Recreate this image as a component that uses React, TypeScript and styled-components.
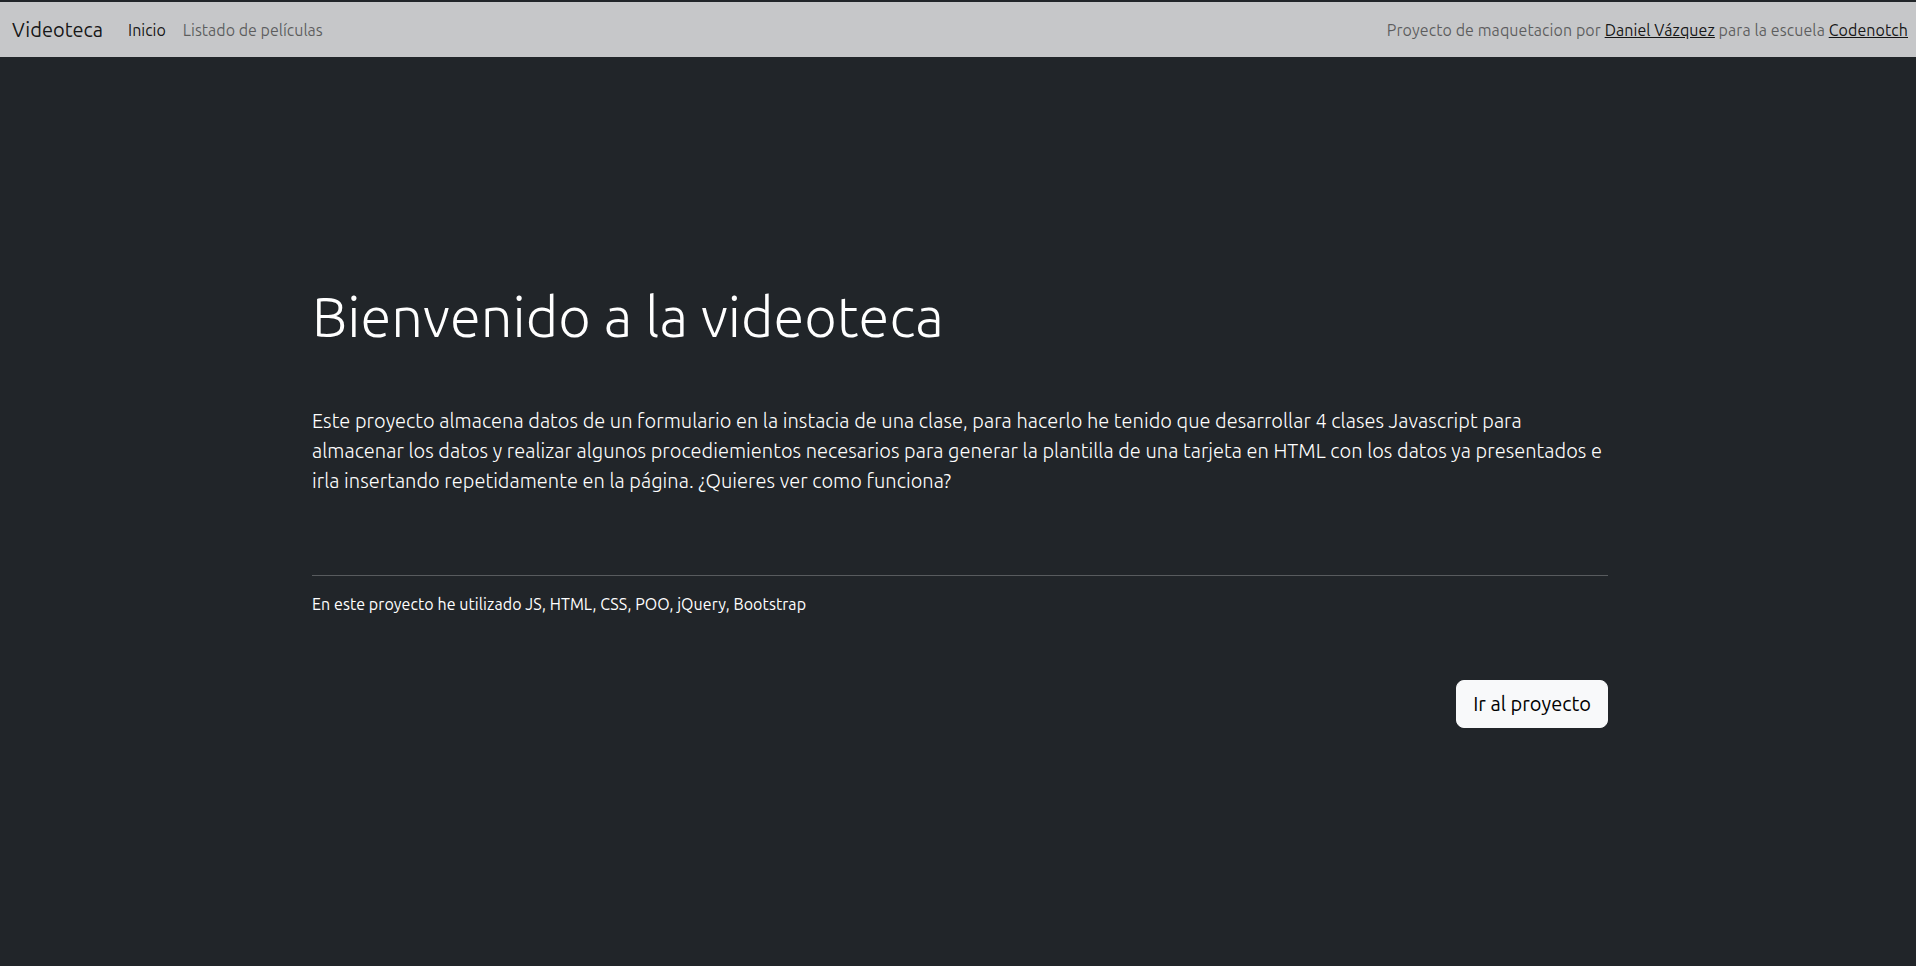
import React from 'react';
import styled, { createGlobalStyle } from 'styled-components';

const GlobalStyle = createGlobalStyle`
  html, body {
    margin: 0;
    padding: 0;
    background-color: #212529;
  }
  body {
    font-family: Ubuntu, "Open Sans", "Noto Sans", sans-serif;
    font-size: 16px;
    line-height: 1.5;
    color: #fff;
    min-height: 966px;
    border-top: 2px solid #212529;
  }
`;

const Navbar = styled.nav`
  display: flex;
  align-items: center;
  justify-content: space-between;
  height: 55px;
  padding: 0 8px 0 12px;
  background-color: #c6c7c9;
  box-sizing: border-box;
`;

const NavLeft = styled.div`
  display: flex;
  align-items: center;
`;

const Brand = styled.a`
  font-size: 20px;
  line-height: 30px;
  color: rgba(0, 0, 0, 0.9);
  text-decoration: none;
  margin-right: 25px;
`;

const NavLink = styled.a<{ $active?: boolean }>`
  font-size: 16px;
  color: ${p => (p.$active ? 'rgba(0, 0, 0, 0.9)' : 'rgba(0, 0, 0, 0.55)')};
  text-decoration: none;
  margin-right: 17px;
`;

const Credits = styled.span`
  font-size: 16px;
  letter-spacing: 0.07px;
  color: rgba(0, 0, 0, 0.55);

  a {
    color: rgba(0, 0, 0, 0.9);
    text-decoration: underline;
  }
`;

const Hero = styled.main`
  width: 1296px;
  margin-left: calc(50% - 646px);
  padding-top: 226px;
  display: flex;
  flex-direction: column;
`;

const Title = styled.h1`
  font-size: 56px;
  font-weight: 300;
  line-height: 1.2;
  letter-spacing: 0.1px;
  margin: 0 0 56px;
`;

const Lead = styled.p`
  font-size: 20px;
  font-weight: 300;
  line-height: 30px;
  letter-spacing: 0.04px;
  margin: 0 0 79px;
`;

const Divider = styled.hr`
  border: 0;
  border-top: 1px solid rgba(255, 255, 255, 0.25);
  margin: 0 0 16px;
`;

const Stack = styled.p`
  font-size: 16px;
  letter-spacing: 0.07px;
  margin: 0 0 64px;
`;

const Actions = styled.div`
  display: flex;
  justify-content: flex-end;
`;

const Button = styled.a`
  display: inline-block;
  padding: 8px 16px;
  font-size: 20px;
  line-height: 30px;
  color: #000;
  background-color: #f8f9fa;
  border: 1px solid #f8f9fa;
  border-radius: 8px;
  text-decoration: none;
`;

const App: React.FC = () => {
  return (
    <>
      <GlobalStyle />
      <Navbar>
        <NavLeft>
          <Brand href="#">Videoteca</Brand>
          <NavLink href="#" $active>Inicio</NavLink>
          <NavLink href="#">Listado de películas</NavLink>
        </NavLeft>
        <Credits>
          Proyecto de maquetacion por <a href="#">Daniel Vázquez</a> para la escuela{' '}
          <a href="#">Codenotch</a>
        </Credits>
      </Navbar>

      <Hero>
        <Title>Bienvenido a la videoteca</Title>
        <Lead>
          Este proyecto almacena datos de un formulario en la instacia de una clase, para hacerlo he tenido que
          desarrollar 4 clases Javascript para almacenar los datos y realizar algunos procediemientos necesarios
          para generar la plantilla de una tarjeta en HTML con los datos ya presentados e irla insertando
          repetidamente en la página. ¿Quieres ver como funciona?
        </Lead>
        <Divider />
        <Stack>En este proyecto he utilizado JS, HTML, CSS, POO, jQuery, Bootstrap</Stack>
        <Actions>
          <Button href="#">Ir al proyecto</Button>
        </Actions>
      </Hero>
    </>
  );
};

export default App;
